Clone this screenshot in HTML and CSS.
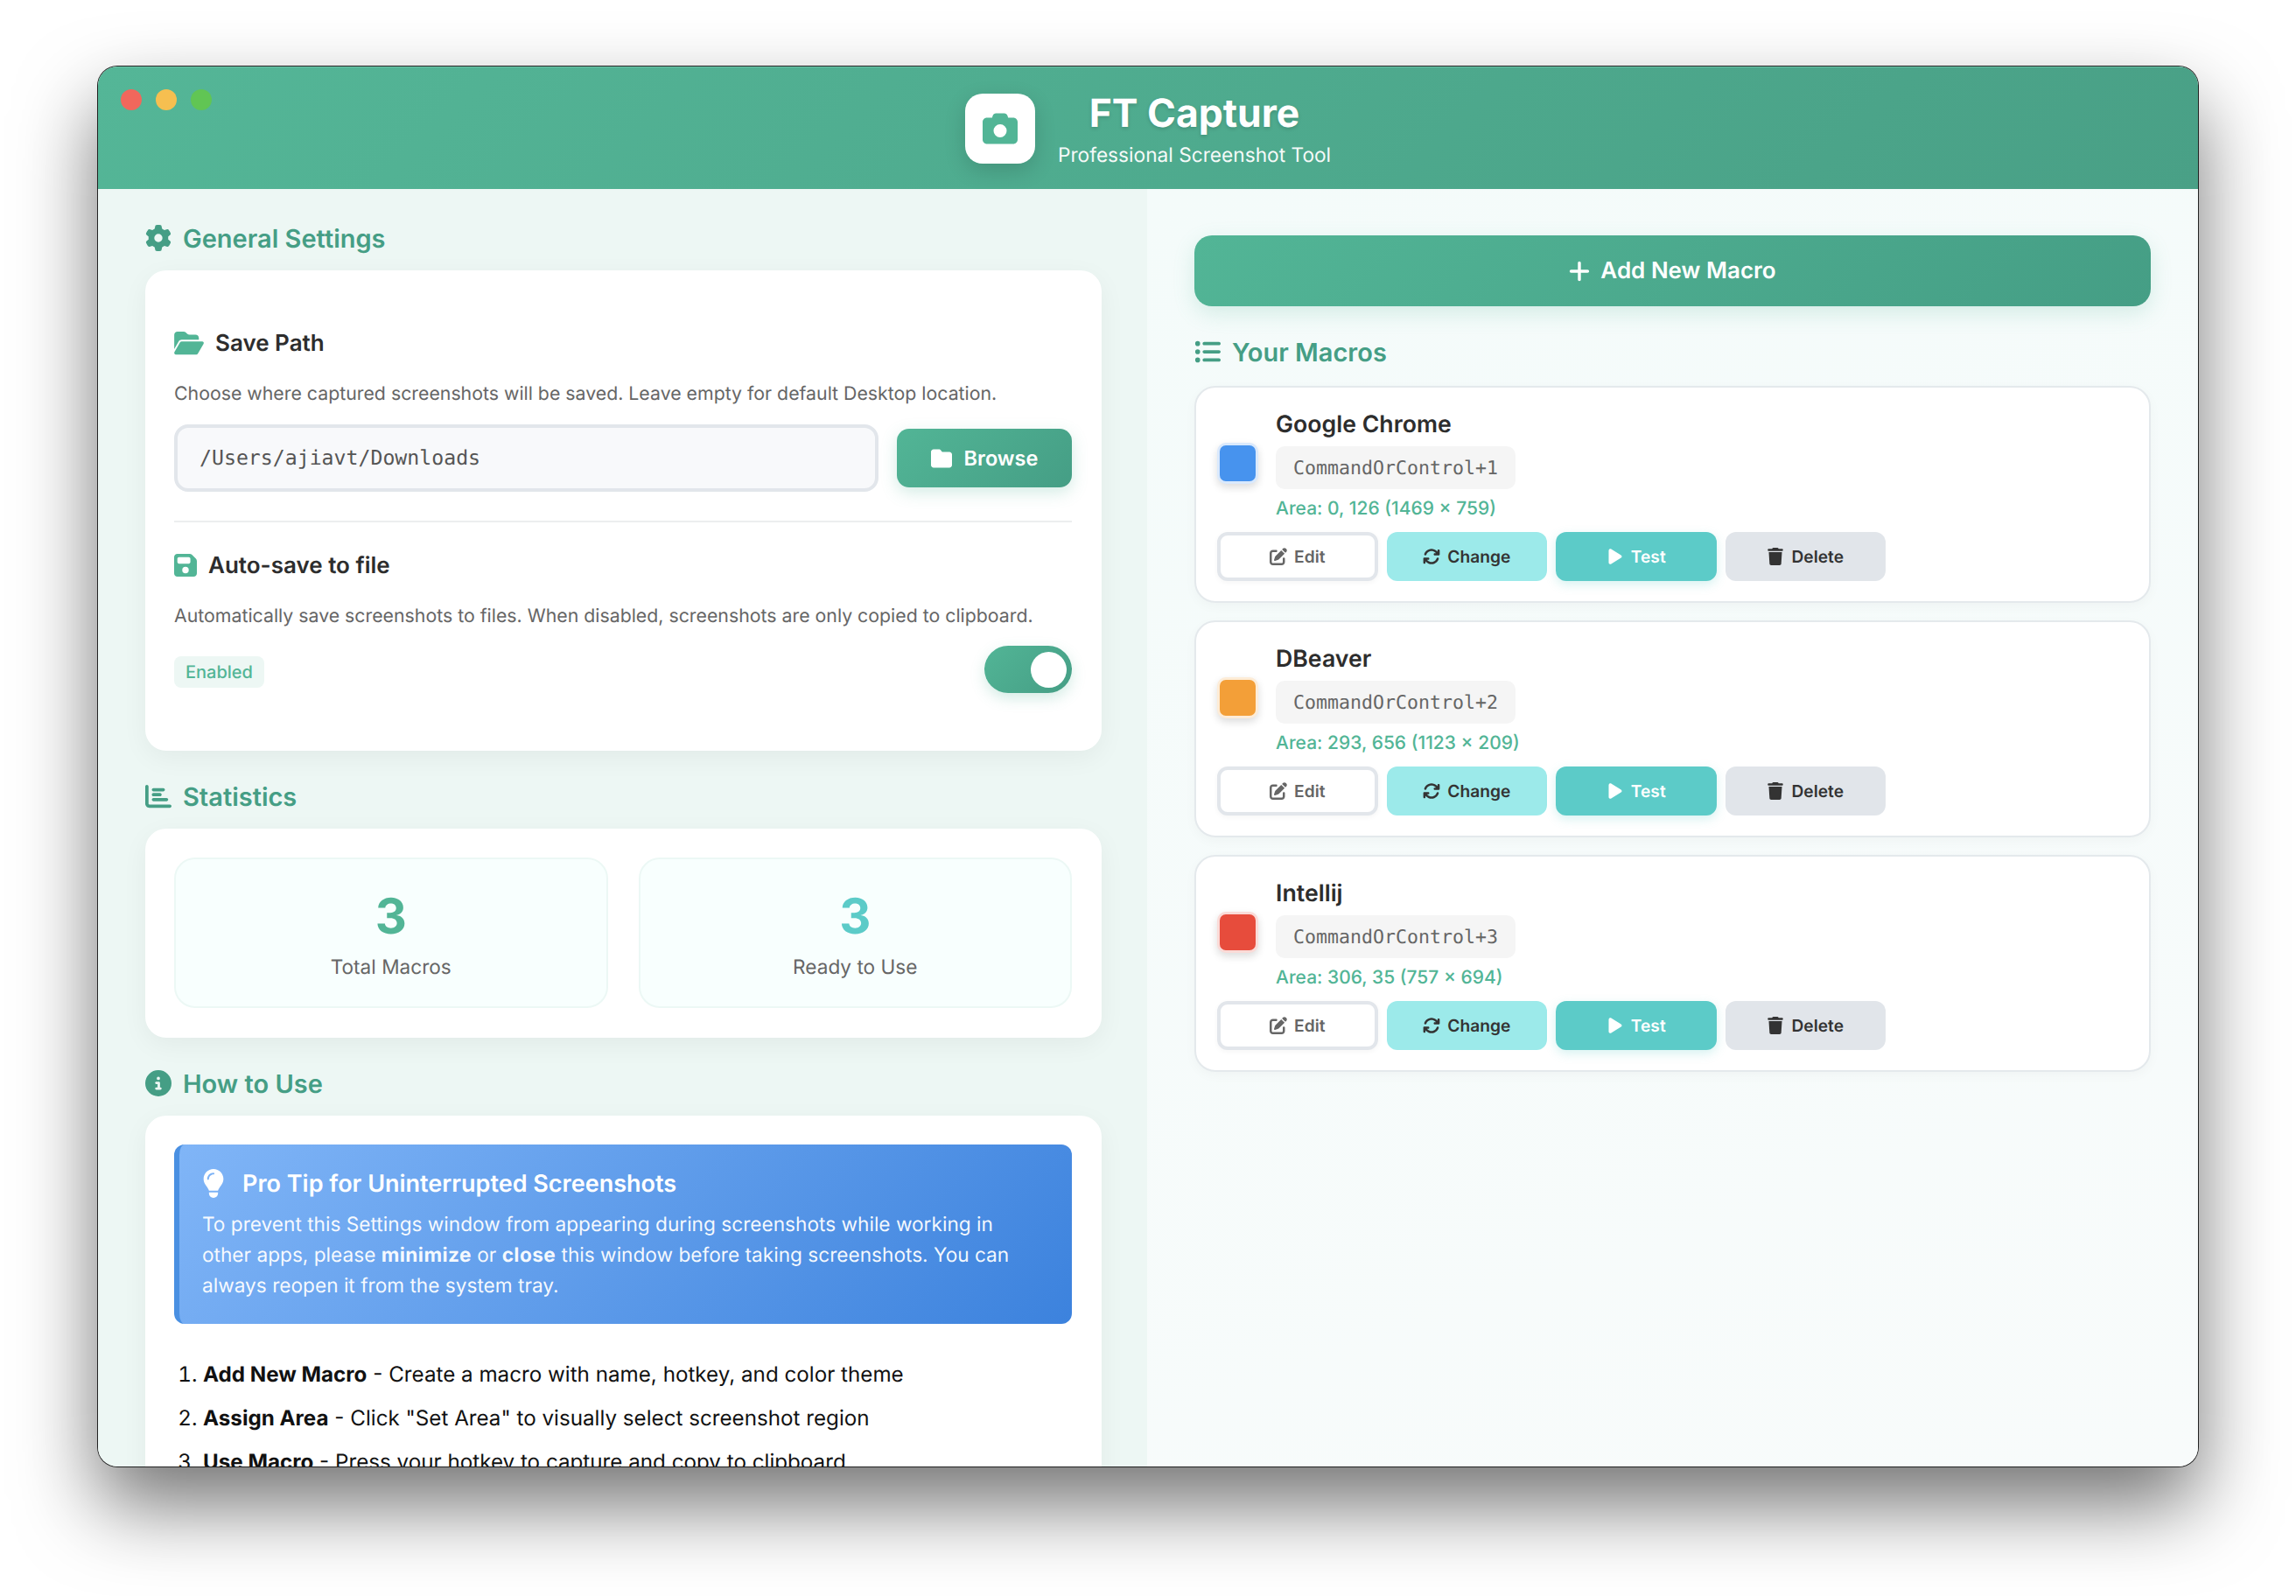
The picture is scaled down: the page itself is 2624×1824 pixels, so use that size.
FILE: index.html
```html
<!DOCTYPE html>
<html>
<head>
<meta charset="utf-8">
<title>FT Capture</title>
<link rel="stylesheet" href="styles.css">
</head>
<body>
<!-- Icon sprite -->
<svg class="sprite" xmlns="http://www.w3.org/2000/svg">
  <symbol id="i-camera" viewBox="0 0 512 512"><path d="M149.1 64.8L138.7 96H64C28.7 96 0 124.7 0 160V416c0 35.3 28.7 64 64 64H448c35.3 0 64-28.7 64-64V160c0-35.3-28.7-64-64-64H373.3L362.9 64.8C356.4 45.2 338.1 32 317.4 32H194.6c-20.7 0-39 13.2-45.5 32.8zM256 192a96 96 0 1 1 0 192 96 96 0 1 1 0-192z"/></symbol>
  <symbol id="i-gear" viewBox="0 0 512 512"><path d="M495.9 166.6c3.2 8.7 .5 18.4-6.4 24.6l-43.3 39.4c1.1 8.3 1.7 16.8 1.7 25.4s-.6 17.1-1.7 25.4l43.3 39.4c6.9 6.2 9.6 15.9 6.4 24.6c-4.4 11.9-9.7 23.3-15.8 34.3l-4.7 8.1c-6.6 11-14 21.4-22.1 31.2c-5.9 7.2-15.7 9.6-24.5 6.8l-55.7-17.7c-13.4 10.3-28.2 18.9-44 25.4l-12.5 57.1c-2 9.1-9 16.3-18.2 17.8c-13.8 2.3-28 3.5-42.5 3.5s-28.7-1.2-42.5-3.5c-9.2-1.5-16.2-8.7-18.2-17.8l-12.5-57.1c-15.8-6.5-30.6-15.1-44-25.4L83.1 425.9c-8.8 2.8-18.6 .3-24.5-6.8c-8.1-9.8-15.5-20.2-22.1-31.2l-4.7-8.1c-6.1-11-11.4-22.4-15.8-34.3c-3.2-8.7-.5-18.4 6.4-24.6l43.3-39.4C64.6 273.1 64 264.6 64 256s.6-17.1 1.7-25.4L22.4 191.2c-6.9-6.2-9.6-15.9-6.4-24.6c4.4-11.9 9.7-23.3 15.8-34.3l4.7-8.1c6.6-11 14-21.4 22.1-31.2c5.9-7.2 15.7-9.6 24.5-6.8l55.7 17.7c13.4-10.3 28.2-18.9 44-25.4l12.5-57.1c2-9.1 9-16.3 18.2-17.8C227.3 1.2 241.5 0 256 0s28.7 1.2 42.5 3.5c9.2 1.5 16.2 8.7 18.2 17.8l12.5 57.1c15.8 6.5 30.6 15.1 44 25.4l55.7-17.7c8.8-2.8 18.6-.3 24.5 6.8c8.1 9.8 15.5 20.2 22.1 31.2l4.7 8.1c6.1 11 11.4 22.4 15.8 34.3zM256 336a80 80 0 1 0 0-160 80 80 0 1 0 0 160z"/></symbol>
  <symbol id="i-folder-open" viewBox="0 0 576 512"><path d="M88.7 223.8L0 375.8V96C0 60.7 28.7 32 64 32H181.5c17 0 33.3 6.7 45.3 18.7l26.5 26.5c12 12 28.3 18.7 45.3 18.7H416c35.3 0 64 28.7 64 64v32H144c-22.8 0-43.8 12.1-55.3 31.8zm27.6 16.1C122.1 230 132.6 224 144 224H544c11.5 0 22 6.1 27.7 16.1s5.7 22.2-.1 32.1l-112 192C453.9 474 443.4 480 432 480H32c-11.5 0-22-6.1-27.7-16.1s-5.7-22.2 .1-32.1l112-192z"/></symbol>
  <symbol id="i-folder" viewBox="0 0 512 512"><path d="M64 480H448c35.3 0 64-28.7 64-64V160c0-35.3-28.7-64-64-64H288c-10.1 0-19.6-4.7-25.6-12.8L243.2 57.6C231.1 41.5 212.1 32 192 32H64C28.7 32 0 60.7 0 96V416c0 35.3 28.7 64 64 64z"/></symbol>
  <symbol id="i-floppy" viewBox="0 0 448 512"><path d="M64 32C28.7 32 0 60.7 0 96V416c0 35.3 28.7 64 64 64H384c35.3 0 64-28.7 64-64V173.3c0-17-6.7-33.3-18.7-45.3L352 50.7C340 38.7 323.7 32 306.7 32H64zm0 96c0-17.7 14.3-32 32-32H288c17.7 0 32 14.3 32 32v64c0 17.7-14.3 32-32 32H96c-17.7 0-32-14.3-32-32V128zM224 288a64 64 0 1 1 0 128 64 64 0 1 1 0-128z"/></symbol>
  <symbol id="i-chart" viewBox="0 0 512 512"><path d="M32 32c17.7 0 32 14.3 32 32V400c0 8.8 7.2 16 16 16H480c17.7 0 32 14.3 32 32s-14.3 32-32 32H80c-44.2 0-80-35.8-80-80V64C0 46.3 14.3 32 32 32zm96 96c0-17.7 14.3-32 32-32l192 0c17.7 0 32 14.3 32 32s-14.3 32-32 32l-192 0c-17.7 0-32-14.3-32-32zm32 64H288c17.7 0 32 14.3 32 32s-14.3 32-32 32H160c-17.7 0-32-14.3-32-32s14.3-32 32-32zm0 96H416c17.7 0 32 14.3 32 32s-14.3 32-32 32H160c-17.7 0-32-14.3-32-32s14.3-32 32-32z"/></symbol>
  <symbol id="i-info" viewBox="0 0 512 512"><path d="M256 512A256 256 0 1 0 256 0a256 256 0 1 0 0 512zM216 336h24V272H216c-13.3 0-24-10.7-24-24s10.7-24 24-24h48c13.3 0 24 10.7 24 24v88h8c13.3 0 24 10.7 24 24s-10.7 24-24 24H216c-13.3 0-24-10.7-24-24s10.7-24 24-24zm40-208a32 32 0 1 1 0 64 32 32 0 1 1 0-64z"/></symbol>
  <symbol id="i-list" viewBox="0 0 512 512"><path d="M64 144a48 48 0 1 0 0-96 48 48 0 1 0 0 96zM192 64c-17.7 0-32 14.3-32 32s14.3 32 32 32H480c17.7 0 32-14.3 32-32s-14.3-32-32-32H192zm0 160c-17.7 0-32 14.3-32 32s14.3 32 32 32H480c17.7 0 32-14.3 32-32s-14.3-32-32-32H192zm0 160c-17.7 0-32 14.3-32 32s14.3 32 32 32H480c17.7 0 32-14.3 32-32s-14.3-32-32-32H192zM64 464a48 48 0 1 0 0-96 48 48 0 1 0 0 96zm48-208a48 48 0 1 0 -96 0 48 48 0 1 0 96 0z"/></symbol>
  <symbol id="i-plus" viewBox="0 0 448 512"><path d="M256 80c0-17.7-14.3-32-32-32s-32 14.3-32 32V224H48c-17.7 0-32 14.3-32 32s14.3 32 32 32H192V432c0 17.7 14.3 32 32 32s32-14.3 32-32V288H400c17.7 0 32-14.3 32-32s-14.3-32-32-32H256V80z"/></symbol>
  <symbol id="i-edit" viewBox="0 0 512 512"><path d="M471.6 21.7c-21.9-21.9-57.3-21.9-79.2 0L362.3 51.7l97.9 97.9 30.1-30.1c21.9-21.9 21.9-57.3 0-79.2L471.6 21.7zm-299.2 220c-6.1 6.1-10.8 13.6-13.5 21.9l-29.6 88.8c-2.9 8.6-.6 18.1 5.8 24.6s15.9 8.7 24.6 5.8l88.8-29.6c8.2-2.7 15.7-7.4 21.9-13.5L437.7 172.3 339.7 74.3 172.4 241.7zM96 64C43 64 0 107 0 160V416c0 53 43 96 96 96H352c53 0 96-43 96-96V320c0-17.7-14.3-32-32-32s-32 14.3-32 32v96c0 17.7-14.3 32-32 32H96c-17.7 0-32-14.3-32-32V160c0-17.7 14.3-32 32-32h96c17.7 0 32-14.3 32-32s-14.3-32-32-32H96z"/></symbol>
  <symbol id="i-sync" viewBox="0 0 512 512"><path d="M105.1 202.6c7.7-21.8 20.2-42.3 37.8-59.8c62.5-62.5 163.8-62.5 226.3 0L386.3 160H352c-17.7 0-32 14.3-32 32s14.3 32 32 32H463.5c0 0 0 0 0 0h.4c17.7 0 32-14.3 32-32V80c0-17.7-14.3-32-32-32s-32 14.3-32 32v35.2L414.4 97.6c-87.5-87.5-229.3-87.5-316.8 0C73.2 122 55.6 150.7 44.8 181.4c-5.9 16.7 2.9 34.9 19.5 40.8s34.9-2.9 40.8-19.5zM39 289.3c-5 1.5-9.8 4.2-13.7 8.2c-4 4-6.7 8.8-8.1 14c-.3 1.2-.6 2.5-.8 3.8c-.3 1.7-.4 3.4-.4 5.1V432c0 17.7 14.3 32 32 32s32-14.3 32-32V396.9l17.6 17.5 0 0c87.5 87.4 229.3 87.4 316.7 0c24.4-24.4 42.1-53.1 52.9-83.7c5.9-16.7-2.9-34.9-19.5-40.8s-34.9 2.9-40.8 19.5c-7.7 21.8-20.2 42.3-37.8 59.8c-62.5 62.5-163.8 62.5-226.3 0l-.1-.1L125.6 352H160c17.7 0 32-14.3 32-32s-14.3-32-32-32H48.4c-1.6 0-3.2 .1-4.8 .3s-3.1 .5-4.6 1z"/></symbol>
  <symbol id="i-play" viewBox="0 0 384 512"><path d="M73 39c-14.8-9.1-33.4-9.4-48.5-.9S0 62.6 0 80V432c0 17.4 9.4 33.4 24.5 41.9s33.7 8.1 48.5-.9L361 297c14.3-8.7 23-24.2 23-41s-8.7-32.2-23-41L73 39z"/></symbol>
  <symbol id="i-trash" viewBox="0 0 448 512"><path d="M135.2 17.7L128 32H32C14.3 32 0 46.3 0 64S14.3 96 32 96H416c17.7 0 32-14.3 32-32s-14.3-32-32-32H320l-7.2-14.3C307.4 6.8 296.3 0 284.2 0H163.8c-12.1 0-23.2 6.8-28.6 17.7zM416 128H32L53.2 467c1.6 25.3 22.6 45 47.9 45H346.9c25.3 0 46.3-19.7 47.9-45L416 128z"/></symbol>
  <symbol id="i-bulb" viewBox="0 0 384 512"><path d="M272 384c9.6-31.9 29.5-59.1 49.2-86.2l0 0c5.2-7.1 10.4-14.2 15.4-21.4c19.8-28.5 31.4-63 31.4-100.3C368 78.8 289.2 0 192 0S16 78.8 16 176c0 37.3 11.6 71.9 31.4 100.3c5 7.2 10.2 14.3 15.4 21.4l0 0c19.8 27.1 39.7 54.4 49.2 86.2H272zM192 512c44.2 0 80-35.8 80-80V416H112v16c0 44.2 35.8 80 80 80zM112 176c0 8.8-7.2 16-16 16s-16-7.2-16-16c0-61.9 50.1-112 112-112c8.8 0 16 7.2 16 16s-7.2 16-16 16c-44.2 0-80 35.8-80 80z"/></symbol>
</svg>

<div class="window">
  <!-- Title bar -->
  <header class="header">
    <div class="traffic-lights">
      <span class="light light-red"></span>
      <span class="light light-yellow"></span>
      <span class="light light-green"></span>
    </div>
    <div class="logo"><svg class="logo-icon"><use href="#i-camera"/></svg></div>
    <div class="brand">
      <h1 class="brand-title">FT Capture</h1>
      <p class="brand-sub">Professional Screenshot Tool</p>
    </div>
  </header>

  <div class="content">
    <!-- Left column -->
    <main class="col-left">
      <h2 class="section-title"><svg class="section-icon"><use href="#i-gear"/></svg>General Settings</h2>
      <section class="card">
        <div class="setting setting-first">
          <h3 class="setting-title"><svg class="setting-icon setting-icon-folder"><use href="#i-folder-open"/></svg>Save Path</h3>
          <p class="setting-desc">Choose where captured screenshots will be saved. Leave empty for default Desktop location.</p>
          <div class="path-row">
            <input class="path-input" type="text" value="/Users/ajiavt/Downloads">
            <button class="btn-browse"><svg class="browse-icon"><use href="#i-folder"/></svg>Browse</button>
          </div>
        </div>
        <div class="setting">
          <h3 class="setting-title"><svg class="setting-icon"><use href="#i-floppy"/></svg>Auto-save to file</h3>
          <p class="setting-desc">Automatically save screenshots to files. When disabled, screenshots are only copied to clipboard.</p>
          <div class="toggle-row">
            <span class="badge">Enabled</span>
            <span class="toggle"><span class="toggle-knob"></span></span>
          </div>
        </div>
      </section>

      <h2 class="section-title"><svg class="section-icon"><use href="#i-chart"/></svg>Statistics</h2>
      <section class="card card-stats">
        <div class="stat">
          <div class="stat-num">3</div>
          <div class="stat-label">Total Macros</div>
        </div>
        <div class="stat">
          <div class="stat-num stat-num-teal">3</div>
          <div class="stat-label">Ready to Use</div>
        </div>
      </section>

      <h2 class="section-title"><svg class="section-icon"><use href="#i-info"/></svg>How to Use</h2>
      <section class="card card-help">
        <div class="tip">
          <h4 class="tip-title"><svg class="tip-icon"><use href="#i-bulb"/></svg>Pro Tip for Uninterrupted Screenshots</h4>
          <p class="tip-text">To prevent this Settings window from appearing during screenshots while working in other apps, please <strong>minimize</strong> or <strong>close</strong> this window before taking screenshots. You can always reopen it from the system tray.</p>
        </div>
        <ol class="steps">
          <li><strong>Add New Macro</strong> - Create a macro with name, hotkey, and color theme</li>
          <li><strong>Assign Area</strong> - Click "Set Area" to visually select screenshot region</li>
          <li><strong>Use Macro</strong> - Press your hotkey to capture and copy to clipboard</li>
        </ol>
      </section>
    </main>

    <!-- Right column -->
    <aside class="col-right">
      <button class="btn-add"><svg class="add-icon"><use href="#i-plus"/></svg>Add New Macro</button>
      <h2 class="section-title section-title-macros"><svg class="section-icon"><use href="#i-list"/></svg>Your Macros</h2>

      <article class="macro">
        <div class="macro-top">
          <span class="swatch swatch-blue"></span>
          <div class="macro-info">
            <div class="macro-name">Google Chrome</div>
            <code class="macro-key">CommandOrControl+1</code>
            <div class="macro-area">Area: 0, 126 (1469 × 759)</div>
          </div>
        </div>
        <div class="macro-actions">
          <button class="btn btn-edit"><svg class="btn-icon"><use href="#i-edit"/></svg>Edit</button>
          <button class="btn btn-change"><svg class="btn-icon"><use href="#i-sync"/></svg>Change</button>
          <button class="btn btn-test"><svg class="btn-icon"><use href="#i-play"/></svg>Test</button>
          <button class="btn btn-delete"><svg class="btn-icon"><use href="#i-trash"/></svg>Delete</button>
        </div>
      </article>

      <article class="macro">
        <div class="macro-top">
          <span class="swatch swatch-orange"></span>
          <div class="macro-info">
            <div class="macro-name">DBeaver</div>
            <code class="macro-key">CommandOrControl+2</code>
            <div class="macro-area">Area: 293, 656 (1123 × 209)</div>
          </div>
        </div>
        <div class="macro-actions">
          <button class="btn btn-edit"><svg class="btn-icon"><use href="#i-edit"/></svg>Edit</button>
          <button class="btn btn-change"><svg class="btn-icon"><use href="#i-sync"/></svg>Change</button>
          <button class="btn btn-test"><svg class="btn-icon"><use href="#i-play"/></svg>Test</button>
          <button class="btn btn-delete"><svg class="btn-icon"><use href="#i-trash"/></svg>Delete</button>
        </div>
      </article>

      <article class="macro">
        <div class="macro-top">
          <span class="swatch swatch-red"></span>
          <div class="macro-info">
            <div class="macro-name">Intellij</div>
            <code class="macro-key">CommandOrControl+3</code>
            <div class="macro-area">Area: 306, 35 (757 × 694)</div>
          </div>
        </div>
        <div class="macro-actions">
          <button class="btn btn-edit"><svg class="btn-icon"><use href="#i-edit"/></svg>Edit</button>
          <button class="btn btn-change"><svg class="btn-icon"><use href="#i-sync"/></svg>Change</button>
          <button class="btn btn-test"><svg class="btn-icon"><use href="#i-play"/></svg>Test</button>
          <button class="btn btn-delete"><svg class="btn-icon"><use href="#i-trash"/></svg>Delete</button>
        </div>
      </article>
    </aside>
  </div>
</div>
</body>
</html>
```

FILE: styles.css
```css
* {
    box-sizing: border-box;
}

html, body {
    margin: 0;
    height: 1824px;
    overflow: hidden;
}

body {
    padding: 76px 112px 0;
    background: #fff;
    font-family: Inter, "Liberation Sans", sans-serif;
    color: #333;
    text-rendering: geometricPrecision;
}

h1, h2, h3, h4, p {
    margin: 0;
}

button, input {
    font-family: inherit;
    border: none;
    text-rendering: geometricPrecision;
}

.sprite {
    display: none;
}

/* Window */
.window {
    position: relative;
    display: flex;
    flex-direction: column;
    width: 2400px;
    height: 1600px;
    overflow: hidden;
    border-radius: 22px;
    box-shadow: 0 0 0 1px #222, 0 44px 90px rgba(0, 0, 0, .55);
}

.header {
    display: flex;
    flex: none;
    align-items: center;
    justify-content: center;
    gap: 26px;
    height: 140px;
    background: linear-gradient(135deg, #54b697, #49a086);
    border-top: 1px solid #6cc4a8;
}

.traffic-lights {
    position: absolute;
    top: 26px;
    left: 26px;
    display: flex;
    gap: 16px;
}

.light {
    width: 24px;
    height: 24px;
    border-radius: 50%;
}

.light-red { background: #f1675c; }
.light-yellow { background: #f6bf50; }
.light-green { background: #61c554; }

.logo {
    display: flex;
    align-items: center;
    justify-content: center;
    width: 80px;
    height: 80px;
    background: #fff;
    border-radius: 20px;
    box-shadow: 0 8px 24px rgba(0, 0, 0, .15);
}

.logo-icon {
    width: 40px;
    height: 40px;
    fill: #52b596;
}

.brand {
    text-align: center;
    color: #fff;
}

.brand-title {
    font-size: 44.5px;
    line-height: 58px;
    font-weight: 700;
    text-shadow: 0 2px 4px rgba(0, 0, 0, .15);
}

.brand-sub {
    margin-top: 5px;
    font-size: 22.7px;
    line-height: 30px;
    opacity: .95;
}

.content {
    display: flex;
    flex: 1;
    min-height: 0;
}

.col-left {
    width: 1199px;
    padding: 36px 52px 0 54px;
    background: #edf7f4;
}

.col-right {
    flex: 1;
    padding: 53px 54px 0;
    background: linear-gradient(160deg, #f4fbfa, #f8fbfb);
}

/* Section headings */
.section-title {
    display: flex;
    align-items: center;
    gap: 13px;
    height: 40px;
    margin-bottom: 17px;
    font-size: 29px;
    font-weight: 600;
    color: #459e85;
}

.section-icon {
    width: 30px;
    height: 30px;
    fill: #459e85;
}

.card {
    margin-bottom: 32px;
    padding: 34px 34px 34px 33px;
    background: #fff;
    border-radius: 24px;
    box-shadow: 0 8px 30px rgba(0, 0, 0, .05);
}

/* Settings */
.setting {
    padding: 32px 0;
}

.setting-first {
    padding-bottom: 33px;
    border-bottom: 2px solid #eceeef;
}

.setting-title {
    display: flex;
    align-items: center;
    gap: 13px;
    height: 34px;
    font-size: 26px;
    font-weight: 600;
    color: #2d2d2d;
}

.setting-icon {
    width: 26px;
    height: 30px;
    fill: #52b596;
}

.setting-icon-folder {
    width: 34px;
}

.setting-desc {
    margin-top: 26px;
    font-size: 21.3px;
    line-height: 30px;
    color: #666;
}

.path-row {
    display: flex;
    align-items: center;
    gap: 21px;
    margin-top: 20px;
}

.path-input {
    width: 805px;
    height: 77px;
    padding: 0 25px;
    font-family: "DejaVu Sans Mono", monospace;
    font-size: 23.2px;
    color: #555;
    background: #f8f9fb;
    border: 4px solid #e2e6eb;
    border-radius: 16px;
}

.btn-browse {
    display: flex;
    flex: 1;
    align-items: center;
    justify-content: center;
    gap: 14px;
    height: 67px;
    font-size: 23.5px;
    font-weight: 600;
    color: #fff;
    background: linear-gradient(135deg, #52b596, #459e85);
    border-radius: 14px;
    box-shadow: 0 6px 18px rgba(82, 181, 150, .25);
}

.browse-icon {
    width: 24px;
    height: 24px;
    fill: #fff;
}

.toggle-row {
    display: flex;
    align-items: center;
    justify-content: space-between;
    margin-top: 19px;
}

.badge {
    display: flex;
    align-items: center;
    height: 36px;
    margin-top: 6px;
    padding: 0 13px;
    font-size: 20px;
    font-weight: 500;
    color: #52b596;
    background: #edf7f4;
    border-radius: 8px;
}

.toggle {
    display: flex;
    align-items: center;
    justify-content: flex-end;
    width: 100px;
    height: 54px;
    padding-right: 6px;
    background: linear-gradient(135deg, #52b596, #459e85);
    border-radius: 27px;
    box-shadow: 0 6px 16px rgba(82, 181, 150, .25);
}

.toggle-knob {
    width: 41px;
    height: 41px;
    background: #fff;
    border-radius: 50%;
}

/* Statistics */
.card-stats {
    display: flex;
    gap: 35px;
    padding-top: 33px;
}

.stat {
    flex: 1;
    height: 172px;
    padding-top: 33px;
    text-align: center;
    background: #f8fffe;
    border: 2px solid #ecf8f5;
    border-radius: 24px;
}

.stat-num {
    font-size: 56px;
    line-height: 64px;
    font-weight: 700;
    color: #52b596;
}

.stat-num-teal {
    color: #5ccbc8;
}

.stat-label {
    margin-top: 12px;
    font-size: 22.6px;
    line-height: 30px;
    color: #666;
}

/* Help */
.card-help {
    margin-bottom: 0;
    padding-top: 33px;
}

.tip {
    height: 205px;
    padding: 26px 30px 0 26px;
    color: #fff;
    background: linear-gradient(135deg, #80b5f7, #3c82dd);
    border-left: 6px solid #4a90e2;
    border-radius: 12px;
}

.tip-title {
    display: flex;
    align-items: center;
    gap: 20px;
    height: 36px;
    font-size: 27px;
    font-weight: 600;
}

.tip-icon {
    width: 26px;
    height: 33px;
    fill: #fff;
}

.tip-text {
    margin-top: 12px;
    font-size: 22.65px;
    line-height: 35px;
    color: rgba(255, 255, 255, .95);
}

.tip-text strong {
    letter-spacing: .4px;
}

.steps {
    margin: 40px 0 0;
    padding: 0 0 0 33px;
    font-size: 24.2px;
    line-height: 36px;
    color: #111;
}

.steps li {
    margin-bottom: 14px;
}

/* Macros */
.btn-add {
    display: flex;
    align-items: center;
    justify-content: center;
    gap: 12px;
    width: 100%;
    height: 81px;
    font-size: 26px;
    font-weight: 600;
    color: #fff;
    background: linear-gradient(135deg, #52b596, #459e85);
    border-radius: 20px;
    box-shadow: 0 8px 24px rgba(82, 181, 150, .2);
}

.add-icon {
    width: 24px;
    height: 28px;
    fill: #fff;
}

.section-title-macros {
    margin-top: 32px;
    margin-bottom: 19px;
}

.macro {
    height: 248px;
    margin-bottom: 20.2px;
    padding: 25px 24px 0 24px;
    background: #fff;
    border: 2px solid #e4e9ec;
    border-radius: 24px;
    box-shadow: 0 4px 14px rgba(0, 0, 0, .03);
}

.macro-top {
    display: flex;
    align-items: center;
    gap: 20px;
    height: 127px;
}

.swatch {
    flex: none;
    width: 47px;
    height: 47px;
    margin-bottom: 4px;
    border: 3px solid rgba(255, 255, 255, .8);
    border-radius: 10px;
    box-shadow: 0 4px 10px rgba(0, 0, 0, .14);
}

.swatch-blue { background: #4793ee; }
.swatch-orange { background: #f39f38; }
.swatch-red { background: #e74c3c; }

.macro-info {
    display: flex;
    flex-direction: column;
    align-items: flex-start;
}

.macro-name {
    font-size: 26.7px;
    line-height: 34px;
    font-weight: 600;
    color: #2d2d2d;
}

.macro-key {
    display: block;
    height: 49px;
    margin-top: 8px;
    padding: 0 20px;
    font-family: "DejaVu Sans Mono", monospace;
    font-size: 21.6px;
    line-height: 52px;
    color: #666;
    background: #f5f5f5;
    border-radius: 10px;
}

.macro-area {
    margin-top: 9px;
    font-size: 21px;
    line-height: 28px;
    font-weight: 500;
    color: #52b596;
}

.macro-actions {
    display: flex;
    gap: 10px;
    margin-top: 13px;
}

.btn {
    display: flex;
    align-items: center;
    justify-content: center;
    gap: 8px;
    width: 183.5px;
    height: 56px;
    font-size: 19.2px;
    font-weight: 600;
    border-radius: 12px;
}

.btn-icon {
    width: 20px;
    height: 20px;
    fill: currentColor;
}

.btn-edit {
    color: #666;
    background: #fff;
    border: 4px solid #e2e6eb;
    box-shadow: 0 2px 6px rgba(0, 0, 0, .04);
}

.btn-change {
    color: #333;
    background: #9ceaea;
}

.btn-test {
    color: #fff;
    background: #5ccbc8;
    box-shadow: 0 4px 12px rgba(92, 203, 200, .25);
}

.btn-delete {
    color: #333;
    background: #e1e5ea;
}
```
